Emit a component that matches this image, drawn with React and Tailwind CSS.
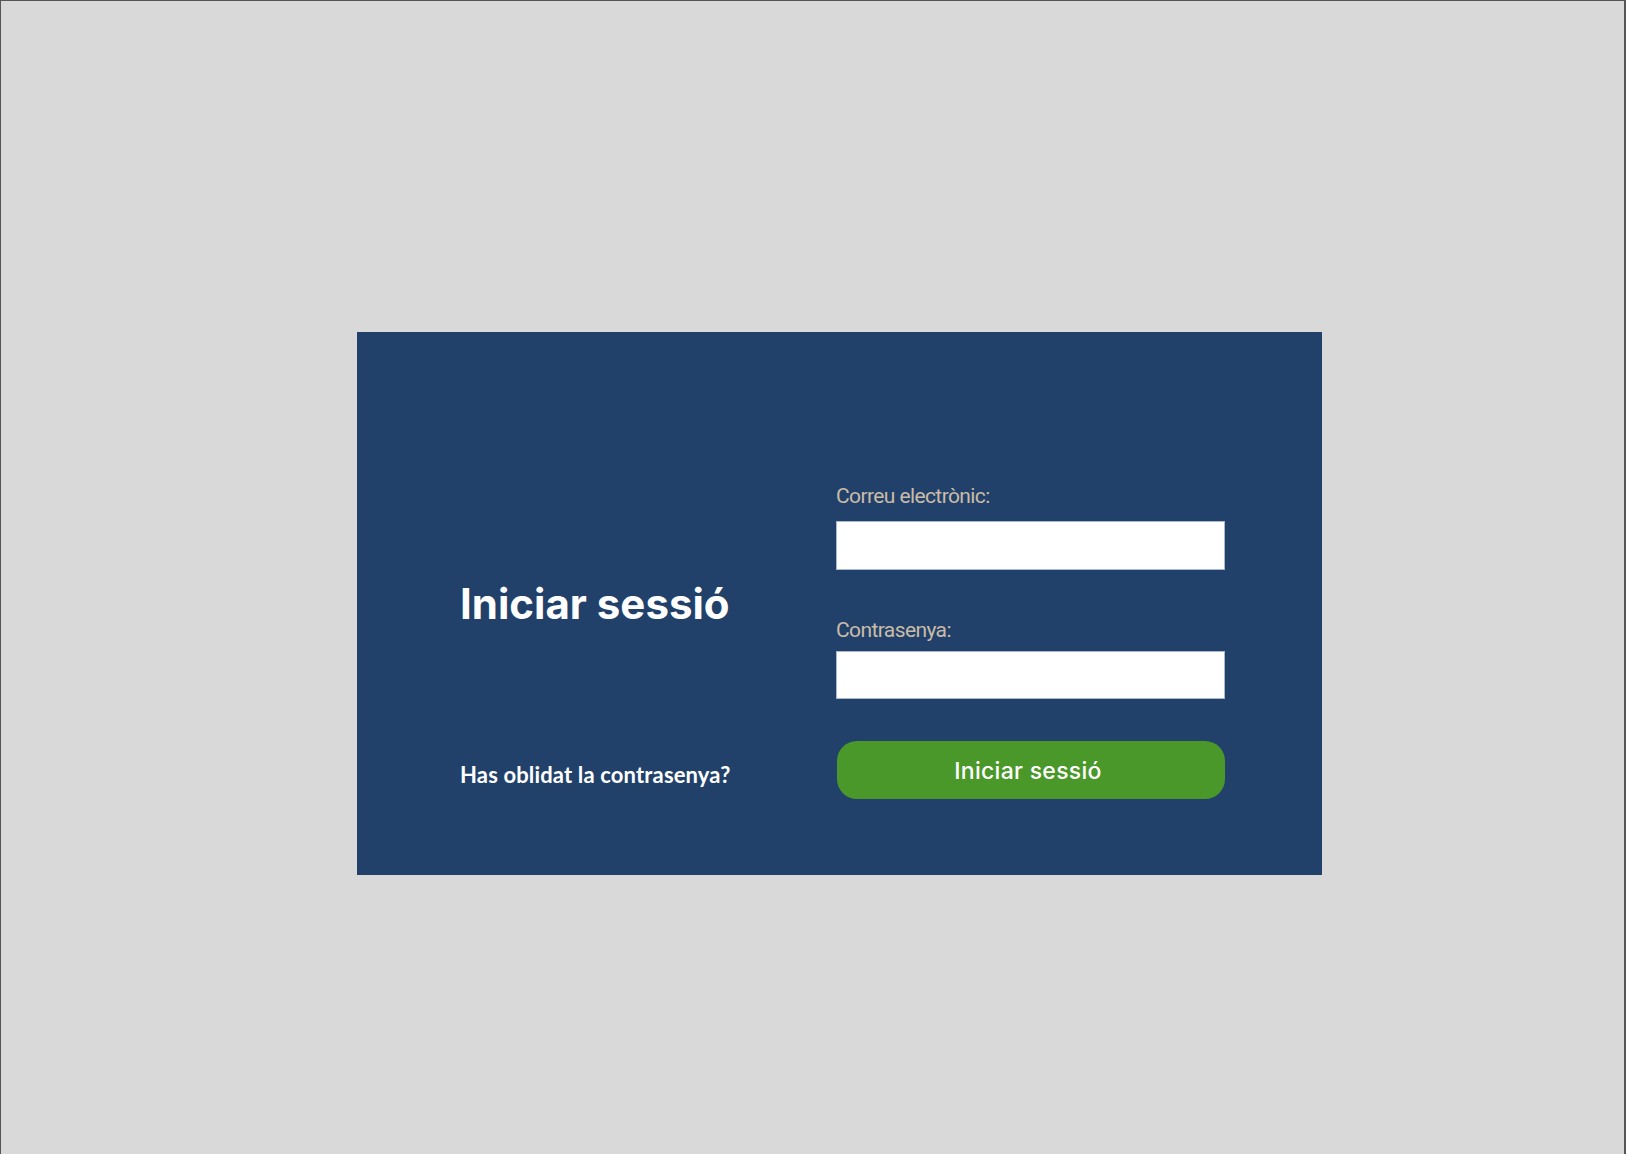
export default function App() {
  return (
    <div className="w-[1626px] h-[1154px] bg-[#d9d9d9] border-l border-t border-r-2 border-[#555555] overflow-hidden">
      <div className="ml-[356px] mt-[331px] w-[965px] h-[543px] bg-[#21416a] flex pl-[103px]">
        <div className="w-[376px] flex flex-col pt-[251px]">
          <h1
            className="text-[42px] leading-[42px] font-bold text-white"
            style={{ fontFamily: "Inter, sans-serif" }}
          >
            Iniciar sessió
          </h1>
          <a
            className="mt-[138px] text-[22px] leading-[24px] font-bold text-white tracking-[0.15px]"
            style={{ fontFamily: "Lato, sans-serif" }}
          >
            Has oblidat la contrasenya?
          </a>
        </div>
        <div className="w-[389px] flex flex-col pt-[152px]" style={{ fontFamily: "Roboto, sans-serif" }}>
          <label className="text-[21px] leading-[24px] text-[#c9bca9] tracking-[-0.6px]">Correu electrònic:</label>
          <input className="mt-[13px] h-[49px] w-full bg-white border border-[#aab8cb] outline-none" type="email" />
          <label className="mt-[48px] text-[21px] leading-[24px] text-[#c9bca9] tracking-[-0.6px]">Contrasenya:</label>
          <input className="mt-[9px] h-[48px] w-full bg-white border border-[#aab8cb] outline-none" type="password" />
          <button
            className="mt-[42px] ml-[1px] h-[58px] w-[388px] rounded-[20px] bg-[#4a972a] text-white text-[23px] font-medium tracking-[0.3px] flex items-center justify-center pt-[3px] pr-[6px]"
            style={{ fontFamily: "Inter, sans-serif" }}
          >
            Iniciar sessió
          </button>
        </div>
      </div>
    </div>
  );
}
